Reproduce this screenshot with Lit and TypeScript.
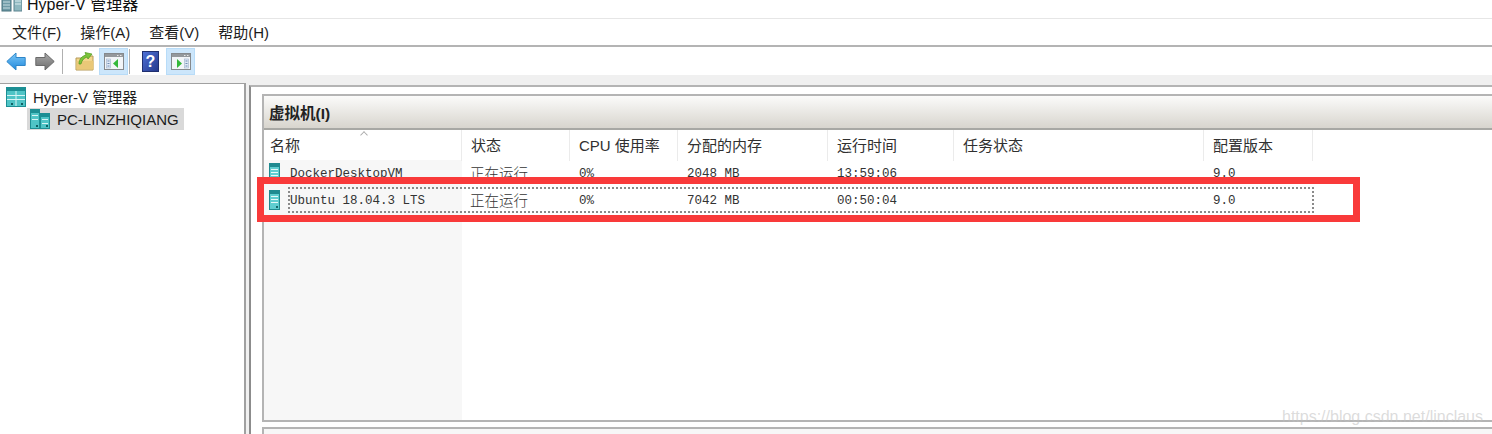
import { LitElement, css, html, svg } from "lit";
import { customElement } from "lit/decorators.js";

const columns = [
  { label: "名称", width: 198 },
  { label: "状态", width: 108 },
  { label: "CPU 使用率", width: 108 },
  { label: "分配的内存", width: 150 },
  { label: "运行时间", width: 126 },
  { label: "任务状态", width: 250 },
  { label: "配置版本", width: 109 },
];

const vms = [
  ["DockerDesktopVM", "正在运行", "0%", "2048 MB", "13:59:06", "", "9.0"],
  ["Ubuntu 18.04.3 LTS", "正在运行", "0%", "7042 MB", "00:50:04", "", "9.0"],
];

const gridTemplate = columns.map((c) => `${c.width}px`).join(" ");

// tall server tower used in the table rows
const vmIcon = () => html`<svg class="vm-icon" width="11" height="20" viewBox="0 0 11 20">
  <rect x="0.5" y="0.5" width="10" height="19" fill="#5fcdd0" stroke="#1f8a90" />
  <rect x="1" y="1" width="9" height="3" fill="#1f8a90" />
  <path d="M2 6.5h7M2 9.5h7M2 12.5h7" stroke="#e6f8f8" stroke-width="1" />
  <rect x="7" y="16" width="2" height="2" fill="#17666b" />
</svg>`;

const serverPanels = (x: number, y: number, w: number, h: number) => svg`
  <rect x=${x + 0.5} y=${y + 0.5} width=${w - 1} height=${h - 1} fill="#4fc4c6" stroke="#1c8f94" />
  <rect x=${x + 1} y=${y + 1} width=${w - 2} height="3" fill="#1c8f94" />
  <path d="M${x + 2} ${y + 6.5}h${w - 4}M${x + 2} ${y + 10.5}h${w - 4}" stroke="#d8f5f5" />
  <rect x=${x + w - 4} y=${y + h - 4} width="2" height="2" fill="#125f63" />
`;

const treeRootIcon = () => html`<svg width="20" height="20" viewBox="0 0 20 20">
  <rect x="0.5" y="0.5" width="19" height="19" fill="#4fc4c6" stroke="#1c8f94" />
  <rect x="1" y="1" width="18" height="3" fill="#1c8f94" />
  <path d="M10 4v15M1 8.5h18M1 12.5h18" stroke="#d8f5f5" />
  <rect x="5" y="16" width="2" height="2" fill="#125f63" />
  <rect x="15" y="16" width="2" height="2" fill="#125f63" />
</svg>`;

const treeHostIcon = () => html`<svg width="20" height="20" viewBox="0 0 20 20">
  ${serverPanels(0, 0, 10, 20)}${serverPanels(10, 4, 10, 16)}
</svg>`;

const titleIcon = () => html`<svg width="22" height="14" viewBox="0 0 22 14">
  <rect x="2" y="-5" width="9" height="17" fill="#6f9aa6" stroke="#47707c" />
  <path d="M3 3h7M3 6h7M3 9h7" stroke="#c8dde2" />
  <rect x="14" y="-5" width="8" height="17" fill="#8fb8c0" stroke="#5c8490" />
  <path d="M15 2h6M15 5h6" stroke="#dcecef" />
</svg>`;

const arrow = (flip: boolean, top: string, bottom: string, edge: string) => html`<svg
  width="20"
  height="19"
  viewBox="0 0 20 19"
  style=${flip ? "transform: scaleX(-1)" : ""}
>
  <defs>
    <linearGradient id="a${top.slice(1)}" x1="0" y1="0" x2="0" y2="1">
      <stop offset="0" stop-color=${top} />
      <stop offset="1" stop-color=${bottom} />
    </linearGradient>
  </defs>
  <path
    d="M0.8 9.5 L10 1 V5.5 H19.2 V13.5 H10 V18 Z"
    fill="url(#a${top.slice(1)})"
    stroke=${edge}
    stroke-linejoin="round"
  />
</svg>`;

const folderIcon = () => html`<svg width="20" height="20" viewBox="0 0 20 20">
  <path d="M1 7h6l2 -2h9v14H1Z" fill="#f3d58c" stroke="#b59a58" />
  <path d="M1.5 10h17v8.5h-17Z" fill="#e9c878" />
  <path
    d="M4 13 C4 8 7 5 11 4 L10 1.5 L17 3 L13 8 L12 6 C9 7 7 9 6 13 Z"
    fill="#7cc43a"
    stroke="#4f9a1f"
    stroke-width="0.7"
  />
</svg>`;

const paneIcon = (side: "left" | "right") => html`<svg width="20" height="17" viewBox="0 0 20 17">
  <rect x="0.5" y="0.5" width="19" height="16" fill="#f2f5f8" stroke="#85898d" />
  <rect x="1" y="1" width="18" height="3" fill="#94989c" />
  <path d="M13 2.5h1.5M16 2.5h1.5" stroke="#e8e8e8" />
  ${side === "left"
    ? svg`<rect x="2.5" y="6" width="4" height="9" fill="#dfe8f4" stroke="#9fb2cc" stroke-width="0.6" />
        <path d="M3.5 8h2M3.5 10.5h2M3.5 13h2" stroke="#6f8cb4" />
        <path d="M14 6 V15 L9 10.5 Z" fill="#34b83a" />`
    : svg`<rect x="13.5" y="6" width="4" height="9" fill="#dfe8f4" stroke="#9fb2cc" stroke-width="0.6" />
        <path d="M14.5 8h2M14.5 10.5h2M14.5 13h2" stroke="#6f8cb4" />
        <path d="M6 6 V15 L11 10.5 Z" fill="#34b83a" />`}
</svg>`;

const helpIcon = () => html`<svg width="17" height="21" viewBox="0 0 17 21">
  <defs>
    <linearGradient id="book" x1="0" y1="0" x2="1" y2="1">
      <stop offset="0" stop-color="#4f72d8" />
      <stop offset="1" stop-color="#24388a" />
    </linearGradient>
  </defs>
  <rect x="0.5" y="0.5" width="16" height="20" fill="url(#book)" stroke="#1f2f70" />
  <text
    x="8.5"
    y="16"
    text-anchor="middle"
    font-family="Liberation Sans, sans-serif"
    font-weight="700"
    font-size="16"
    fill="#ffffff"
  >?</text>
</svg>`;

@customElement("app-root")
export class AppRoot extends LitElement {
  static styles = css`
    :host {
      display: block;
      position: relative;
      width: 1492px;
      height: 434px;
      overflow: hidden;
      background: #fff;
      color: #1c1c1c;
      font-family: "Liberation Sans", "Noto Sans CJK SC", sans-serif;
      font-size: 15px;
    }
    .title {
      height: 18px;
      display: flex;
      align-items: flex-end;
      gap: 5px;
      overflow: hidden;
      border-bottom: 1px solid #e6e6e6;
    }
    .title svg {
      flex: none;
      margin-bottom: 5px;
    }
    .title span {
      font-size: 16px;
      line-height: 22px;
      margin-bottom: 2px;
      color: #111;
    }
    .menu {
      height: 24px;
      display: flex;
      align-items: center;
      gap: 19px;
      padding: 0 0 2px 12px;
      border-bottom: 2px solid #b4b4b4;
    }
    .toolbar {
      height: 28px;
      display: flex;
      align-items: center;
      padding-left: 6px;
      border-bottom: 1px solid #f0f0f0;
    }
    .tool {
      width: 29px;
      height: 27px;
      display: flex;
      align-items: center;
      justify-content: center;
      flex: none;
    }
    .tool.on {
      background: #cce6fb;
      outline: 1px solid #b8dcf8;
      outline-offset: -1px;
    }
    .tool.arrow {
      width: 20px;
    }
    .tool.arrow + .tool.arrow {
      margin-left: 9px;
    }
    .tool.folder {
      width: 20px;
      margin-right: 4px;
    }
    .tool.help {
      width: 17px;
      margin-right: 7px;
    }
    .sep {
      width: 1px;
      height: 25px;
      background: #b0b0b0;
      margin: 0 12px 0 7px;
    }
    .sep.narrow {
      margin: 0 12px 0 1px;
    }
    .gap {
      height: 7px;
      background: #f0f0f0;
    }
    .main {
      display: flex;
      height: 351px;
      background: #f0f0f0;
    }
    .tree {
      width: 244px;
      flex: none;
      background: #fff;
      border-top: 1px solid #a0a0a0;
      border-right: 2px solid #a0a0a0;
      padding-top: 2px;
    }
    .node {
      display: flex;
      align-items: center;
      height: 22px;
      gap: 7px;
      padding-left: 6px;
      white-space: nowrap;
    }
    .node.root span {
      margin-bottom: 2px;
    }
    .node.host {
      margin-left: 27px;
      padding-left: 3px;
      width: 154px;
      background: #d9d9d9;
    }
    .content {
      flex: 1;
      margin-left: 3px;
      margin-top: 2px;
      background: #fff;
      border-top: 2px solid #b4b4b4;
      border-left: 2px solid #8c8c8c;
      padding: 7px 0 0 11px;
      display: flex;
      flex-direction: column;
    }
    .vm-box {
      height: 324px;
      flex: none;
      border-top: 2px solid #b4b4b4;
      border-left: 2px solid #b4b4b4;
      border-bottom: 2px solid #b4b4b4;
      display: flex;
      flex-direction: column;
    }
    .vm-head {
      height: 32px;
      flex: none;
      display: flex;
      align-items: center;
      padding-left: 5px;
      font-weight: 700;
      font-size: 15.5px;
      color: #222;
      background: linear-gradient(#fbfbfa, #d8d5ce);
      border-bottom: 2px solid #a8a8a4;
    }
    .table {
      flex: 1;
      position: relative;
      background: linear-gradient(#f7f7f7, #f7f7f7) no-repeat left top / 198px 100%;
    }
    .row {
      display: grid;
    }
    .row.header {
      height: 30px;
      background: #fff;
    }
    .row.header div {
      line-height: 31px;
      padding-left: 9px;
      border-right: 1px solid #ebebeb;
      box-sizing: border-box;
      white-space: nowrap;
      color: #303030;
    }
    .row.header div:first-child {
      padding-left: 6px;
    }
    .sort {
      position: absolute;
      left: 97px;
      top: 2px;
      width: 5px;
      height: 5px;
      border-left: 1px solid #aaa;
      border-top: 1px solid #aaa;
      transform: rotate(45deg) scale(0.9);
    }
    .row.vm {
      height: 27px;
      align-items: center;
      font-family: "Liberation Mono", "Noto Sans CJK SC", monospace;
      font-size: 12.5px;
      color: #333;
      position: relative;
    }
    .row.vm div {
      padding-left: 9px;
      white-space: nowrap;
    }
    .row.vm .cjk {
      font-family: "Noto Sans CJK SC", sans-serif;
      font-size: 14.5px;
      line-height: 14px;
      font-weight: 300;
      margin-bottom: 2px;
      padding-left: 8px;
    }
    .row.vm .name {
      display: flex;
      align-items: center;
      gap: 10px;
      padding-left: 5px;
    }
    .vm-icon {
      flex: none;
      margin-bottom: 2px;
    }
    .focus {
      position: absolute;
      left: 24px;
      top: 0;
      width: 1026px;
      height: 26px;
      border: 2px dotted #8a8a8a;
      box-sizing: border-box;
      pointer-events: none;
    }
    .next-box {
      margin-top: 5px;
      flex: 1;
      border-top: 2px solid #b4b4b4;
      border-left: 2px solid #b4b4b4;
      background: #f7f7f7;
    }
    .highlight {
      position: absolute;
      left: 257px;
      top: 177px;
      width: 1103px;
      height: 45px;
      border: 7px solid #f93a3a;
      box-sizing: border-box;
    }
    .watermark {
      position: absolute;
      right: 9px;
      top: 407px;
      font-size: 16px;
      line-height: 20px;
      color: rgba(190, 190, 190, 0.55);
      white-space: nowrap;
    }
  `;

  render() {
    const grid = `grid-template-columns: ${gridTemplate}`;
    return html`
      <div class="title">${titleIcon()}<span>Hyper-V 管理器</span></div>
      <div class="menu">
        <span>文件(F)</span><span>操作(A)</span><span>查看(V)</span><span>帮助(H)</span>
      </div>
      <div class="toolbar">
        <div class="tool arrow">${arrow(false, "#7cc8f8", "#1f88dc", "#2f86c8")}</div>
        <div class="tool arrow">${arrow(true, "#a8a8a8", "#6e6e6e", "#6a6a6a")}</div>
        <div class="sep"></div>
        <div class="tool folder">${folderIcon()}</div>
        <div class="tool on">${paneIcon("left")}</div>
        <div class="sep narrow"></div>
        <div class="tool help">${helpIcon()}</div>
        <div class="tool on">${paneIcon("right")}</div>
      </div>
      <div class="gap"></div>
      <div class="main">
        <div class="tree">
          <div class="node root">${treeRootIcon()}<span>Hyper-V 管理器</span></div>
          <div class="node host">${treeHostIcon()}<span>PC-LINZHIQIANG</span></div>
        </div>
        <div class="content">
          <div class="vm-box">
            <div class="vm-head">虚拟机(I)</div>
            <div class="table">
              <div class="row header" style=${grid}>
                ${columns.map((c) => html`<div>${c.label}</div>`)}
              </div>
              <span class="sort"></span>
              ${vms.map(
                (vm, i) => html`<div class="row vm" style=${grid}>
                  <div class="name">${vmIcon()}<span>${vm[0]}</span></div>
                  <div class="cjk">${vm[1]}</div>
                  ${vm.slice(2).map((v) => html`<div>${v}</div>`)}
                  ${i === 1 ? html`<span class="focus"></span>` : ""}
                </div>`
              )}
            </div>
          </div>
          <div class="next-box"></div>
        </div>
      </div>
      <div class="highlight"></div>
      <div class="watermark">https://blog.csdn.net/linclaus</div>
    `;
  }
}
